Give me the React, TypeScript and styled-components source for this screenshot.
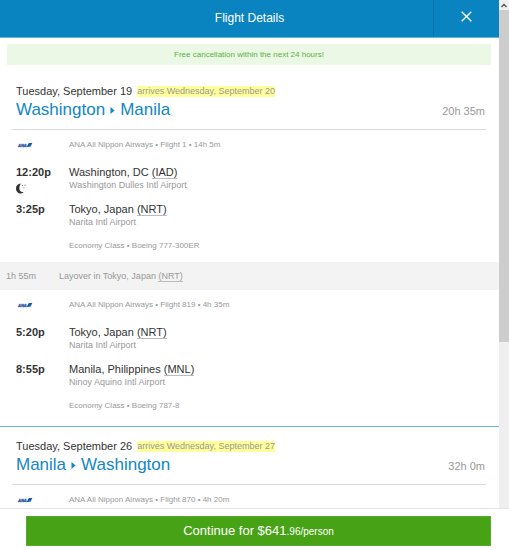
import React from "react";
import styled, { createGlobalStyle } from "styled-components";

const GlobalStyle = createGlobalStyle`
  * { box-sizing: border-box; }
  body {
    margin: 0;
    background: #fff;
    color: #333;
    font-family: "Liberation Sans", Arial, sans-serif;
    font-size: 11px;
    line-height: 14px;
    overflow: hidden;
  }
  h1, h2, p { margin: 0; font-weight: normal; }
`;

const Page = styled.div`
  display: flex;
  flex-direction: column;
  height: 100vh;
`;

const Viewport = styled.div`
  display: flex;
  flex: 1;
  min-height: 0;
  overflow: hidden;
`;

const Dialog = styled.main`
  flex: 1;
  min-width: 0;
`;

const Header = styled.header`
  display: grid;
  grid-template-columns: 1fr 66px;
  height: 38px;
  background: #0a84c1;
  border-bottom: 1px solid #62b4dd;
  color: #fff;
`;

const Title = styled.h1`
  padding: 10px 0 0 66px;
  font-size: 12px;
  line-height: 16px;
  text-align: center;
`;

const CloseButton = styled.button`
  display: flex;
  justify-content: center;
  padding: 11px 0 0;
  border: 0;
  border-left: 1px solid #0873aa;
  background: none;
  color: inherit;
`;

const Notice = styled.p`
  margin: 6px 8px 0 7px;
  padding: 4px;
  background: #eaf8e5;
  color: #5eb043;
  font-size: 8px;
  line-height: 13px;
  text-align: center;
`;

const Trip = styled.section<{ $divided?: boolean }>`
  padding-top: ${(p) => (p.$divided ? 12 : 19)}px;
  padding-bottom: 4px;
  border-top: ${(p) => (p.$divided ? "1px solid #6bb8dc" : "none")};
`;

const TripHead = styled.div`
  display: flex;
  justify-content: space-between;
  align-items: flex-end;
  margin: 0 13px 0 12px;
  padding: 0 1px 7px 4px;
  border-bottom: 1px solid #dadada;
`;

const DateLine = styled.p`
  display: flex;
  gap: 5px;
`;

const Arrival = styled.mark`
  align-self: center;
  font-size: 9px;
  line-height: 11px;
  background: #ffff99;
  color: #999;
`;

const Route = styled.h2`
  display: flex;
  align-items: center;
  gap: 5px;
  color: #1286c5;
  font-size: 17px;
  line-height: 24px;
`;

const Duration = styled.span`
  padding-bottom: 4px;
  color: #999;
`;

const Flight = styled.div`
  padding: 0 12px 10px 16px;
`;

const Row = styled.div`
  display: grid;
  grid-template-columns: 53px 1fr;
`;

const FlightRow = styled(Row)`
  align-items: center;
  padding: 8px 0 14px;
`;

const StopRow = styled(Row)`
  min-height: 37px;
`;

const Meta = styled.p`
  color: #999;
  font-size: 8px;
  line-height: 13px;
`;

const Time = styled.time`
  font-weight: bold;
`;

const Airport = styled.p`
  color: #999;
  font-size: 9px;
  line-height: 12px;
`;

const Code = styled.abbr`
  text-decoration: none;
  border-bottom: 1px solid #bbb;
`;

const Layover = styled.div`
  display: grid;
  grid-template-columns: 53px 1fr;
  padding: 7px 6px;
  background: #f3f3f3;
  color: #999;
  font-size: 9px;
`;

const Scrollbar = styled.div`
  display: grid;
  grid-template-rows: 10px 332px 1fr;
  width: 10px;
  background: #efefef;
`;

const ScrollArrow = styled.div`
  display: flex;
  align-items: center;
  justify-content: center;
`;

const Thumb = styled.div`
  background: #cdcdcd;
`;

const Footer = styled.footer`
  padding: 7px 18px 4px 26px;
  border-top: 1px solid #e3e3e3;
  background: #fff;
`;

const ContinueButton = styled.button`
  display: block;
  width: 100%;
  padding: 7px;
  border: 1px solid #56aa2c;
  background: #48a216;
  color: #fff;
  font-family: inherit;
  font-size: 13px;
  line-height: 14px;
`;

const Cents = styled.span`
  font-size: 10px;
  line-height: 10px;
`;

const Block = styled.svg`
  display: block;
`;

const MoonIcon = styled(Block)`
  margin-top: 4px;
`;

const AirlineLogo = () => (
  <Block width="18" height="6" viewBox="0 0 18 6" role="img" aria-label="ANA">
    <text x="2" y="5" fontSize="4" fontWeight="bold" fontStyle="italic" fill="#1d55a5" stroke="#1d55a5" strokeWidth=".3">ANA</text>
    <path d="M10.6 5 L12.8 1 H16.4 L14.2 5Z" fill="#1d55a5" />
    <path d="M12.6 5 L13.2 3.8 H14.9 L14.2 5Z" fill="#3b9bd4" />
  </Block>
);

const Moon = () => (
  <MoonIcon width="11" height="11" viewBox="0 0 11 11" role="img" aria-label="Overnight flight">
    <path d="M5 .5 C1.7.7 0 2.7 0 5.4 C0 8.3 2 10.4 4.8 10.4 C6 10.4 7 10 7.7 9.1 C4.7 9.2 3.4 7.7 3.4 5.2 C3.4 3 3.9 1.6 5 .5Z" fill="#333" />
    <circle cx="6.4" cy="2.5" r=".6" fill="#777" />
    <circle cx="9" cy="2.2" r=".6" fill="#777" />
    <circle cx="7.9" cy="4.8" r=".6" fill="#777" />
  </MoonIcon>
);

interface StopData {
  time: string;
  city: string;
  code: string;
  airport: string;
  overnight?: boolean;
}

const Stop = ({ time, city, code, airport, overnight }: StopData) => (
  <StopRow>
    <div>
      <Time>{time}</Time>
      {overnight && <Moon />}
    </div>
    <div>
      <p>{city} <Code>({code})</Code></p>
      <Airport>{airport}</Airport>
    </div>
  </StopRow>
);

const Carrier = ({ children }: { children: React.ReactNode }) => (
  <FlightRow>
    <AirlineLogo />
    <Meta>{children}</Meta>
  </FlightRow>
);

const Cabin = ({ children }: { children: React.ReactNode }) => (
  <Row>
    <span />
    <Meta>{children}</Meta>
  </Row>
);

interface HeadingData {
  date: string;
  arrival: string;
  from: string;
  to: string;
  duration: string;
}

const Heading = ({ date, arrival, from, to, duration }: HeadingData) => (
  <TripHead>
    <div>
      <DateLine>{date}<Arrival>{arrival}</Arrival></DateLine>
      <Route>
        {from}
        <svg width="5" height="8" viewBox="0 0 5 8" aria-label="to">
          <path d="M.5 1 L4.5 4.5 L.5 8Z" fill="currentColor" />
        </svg>
        {to}
      </Route>
    </div>
    <Duration>{duration}</Duration>
  </TripHead>
);

export default function App() {
  return (
    <Page>
      <GlobalStyle />
      <Viewport>
        <Dialog>
          <Header>
            <Title>Flight Details</Title>
            <CloseButton type="button" aria-label="Close">
              <svg width="11" height="11" viewBox="0 0 11 11">
                <path d="M.7.7 L10.3 10.3 M10.3.7 L.7 10.3" stroke="currentColor" strokeWidth="1.4" />
              </svg>
            </CloseButton>
          </Header>
          <Notice>Free cancellation within the next 24 hours!</Notice>
          <Trip>
            <Heading
              date="Tuesday, September 19"
              arrival="arrives Wednesday, September 20"
              from="Washington"
              to="Manila"
              duration="20h 35m"
            />
            <Flight>
              <Carrier>ANA All Nippon Airways • Flight 1 • 14h 5m</Carrier>
              <Stop time="12:20p" city="Washington, DC" code="IAD" airport="Washington Dulles Intl Airport" overnight />
              <Stop time="3:25p" city="Tokyo, Japan" code="NRT" airport="Narita Intl Airport" />
              <Cabin>Economy Class • Boeing 777-300ER</Cabin>
            </Flight>
            <Layover>
              <span>1h 55m</span>
              <span>Layover in Tokyo, Japan <Code>(NRT)</Code></span>
            </Layover>
            <Flight>
              <Carrier>ANA All Nippon Airways • Flight 819 • 4h 35m</Carrier>
              <Stop time="5:20p" city="Tokyo, Japan" code="NRT" airport="Narita Intl Airport" />
              <Stop time="8:55p" city="Manila, Philippines" code="MNL" airport="Ninoy Aquino Intl Airport" />
              <Cabin>Economy Class • Boeing 787-8</Cabin>
            </Flight>
          </Trip>
          <Trip $divided>
            <Heading
              date="Tuesday, September 26"
              arrival="arrives Wednesday, September 27"
              from="Manila"
              to="Washington"
              duration="32h 0m"
            />
            <Flight>
              <Carrier>ANA All Nippon Airways • Flight 870 • 4h 20m</Carrier>
            </Flight>
          </Trip>
        </Dialog>
        <Scrollbar aria-hidden="true">
          <ScrollArrow>
            <svg width="6" height="5" viewBox="0 0 6 5">
              <path d="M.5 4 L3 1.5 L5.5 4" fill="none" stroke="#555" strokeWidth="1.4" />
            </svg>
          </ScrollArrow>
          <Thumb />
        </Scrollbar>
      </Viewport>
      <Footer>
        <ContinueButton type="button">
          Continue for $641<Cents>.96/person</Cents>
        </ContinueButton>
      </Footer>
    </Page>
  );
}
